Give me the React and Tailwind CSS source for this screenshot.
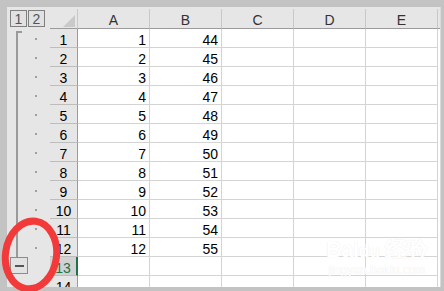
const cols = ["A", "B", "C", "D", "E"];
const rows = Array.from({ length: 14 }, (_, i) => i + 1);

function OutlineCell({ row }) {
  if (row <= 12) {
    return (
      <div className="relative w-[43px] h-full flex shrink-0">
        <div
          className={`ml-[9px] w-[2px] bg-[#9a9a9a] ${row === 1 ? "mt-[2px]" : ""}`}
        />
        {row === 1 && <div className="absolute left-[9px] top-[2px] w-[6px] h-[2px] bg-[#9a9a9a]" />}
        <div className="ml-[17px] self-center w-[2px] h-[2px] bg-[#a0a0a0]" />
      </div>
    );
  }
  if (row === 13) {
    return (
      <div className="w-[43px] h-full shrink-0 flex items-start">
        <div className="ml-[3px] w-[18px] h-[17px] border border-[#8c8c8c] bg-[#e2e2e2] flex items-center justify-center">
          <div className="w-[9px] h-[2px] bg-[#555]" />
        </div>
      </div>
    );
  }
  return <div className="w-[43px] h-full shrink-0" />;
}

export default function App() {
  return (
    <div
      className="relative w-[444px] h-[291px] bg-[#c3c3c3] pt-[7px] pl-[7px] overflow-hidden"
      style={{ fontFamily: '"Liberation Sans", Arial, sans-serif' }}
    >
      <div className="w-[434px] h-[280px] bg-[#e6e6e6] pt-[2px] overflow-hidden border-r border-[#dadada]">
        {/* header row */}
        <div className="flex h-[20px]">
          <div className="w-[43px] shrink-0 flex gap-px pl-[3px] pt-px">
            {["1", "2"].map((n) => (
              <div
                key={n}
                className="w-[17px] h-[17px] border border-[#7f7f7f] bg-[#e2e2e2] text-[14px] leading-[16px] text-center text-[#555]"
              >
                {n}
              </div>
            ))}
          </div>
          <div className="w-[28px] shrink-0 border-r border-b border-r-[#c8c8c8] border-b-[#9b9b9b] flex items-end justify-end pr-[2px] pb-[1px]">
            <svg width="12" height="12" viewBox="0 0 12 12">
              <polygon points="12,0 12,12 0,12" fill="#c9c9c9" />
            </svg>
          </div>
          {cols.map((c) => (
            <div
              key={c}
              className="w-[72px] shrink-0 border-r border-b border-r-[#c8c8c8] border-b-[#9b9b9b] text-center text-[14px] leading-[22px] text-[#333] overflow-hidden"
            >
              {c}
            </div>
          ))}
          <div className="flex-1 border-b border-[#9b9b9b]" />
        </div>

        {rows.map((r) => {
          const active = r === 13;
          return (
            <div key={r} className="flex h-[19px]">
              <OutlineCell row={r} />
              <div
                className={`w-[28px] shrink-0 border-b border-r text-center text-[14px] leading-[22px] overflow-hidden ${
                  active
                    ? "bg-[#d2d2d2] text-[#217346] border-b-[#bdbdbd] border-r-2 border-r-[#217346]"
                    : "bg-[#e6e6e6] text-black border-b-[#bdbdbd] border-r-[#9b9b9b]"
                }`}
              >
                {r}
              </div>
              {cols.map((c, i) => (
                <div
                  key={c}
                  className="w-[72px] shrink-0 bg-white border-r border-b border-[#d4d4d4] text-right pr-[3px] text-[14px] leading-[22px] text-black overflow-hidden"
                >
                  {r <= 12 && i === 0 ? r : r <= 12 && i === 1 ? r + 43 : ""}
                </div>
              ))}
              <div className="flex-1 bg-white" />
            </div>
          );
        })}
      </div>

      {/* watermark */}
      <div className="absolute left-[326px] top-[238px] flex flex-col items-center text-white pointer-events-none select-none">
        <div className="text-[22px] font-bold leading-[24px] tracking-tight [text-shadow:0_0_1px_#e4e4e4]">
          Bai<span className="text-[18px]">du</span> 经验
        </div>
        <div className="text-[12px] leading-[14px] [text-shadow:0_0_1px_#e4e4e4]">jingyan.baidu.com</div>
      </div>

      {/* red marker circle */}
      <svg className="absolute left-0 top-[200px] pointer-events-none" width="90" height="91" viewBox="0 0 90 91">
        <ellipse cx="31" cy="55" rx="25.5" ry="34" fill="none" stroke="#f23a3a" strokeWidth="7" transform="rotate(8 31 55)" />
      </svg>
    </div>
  );
}
